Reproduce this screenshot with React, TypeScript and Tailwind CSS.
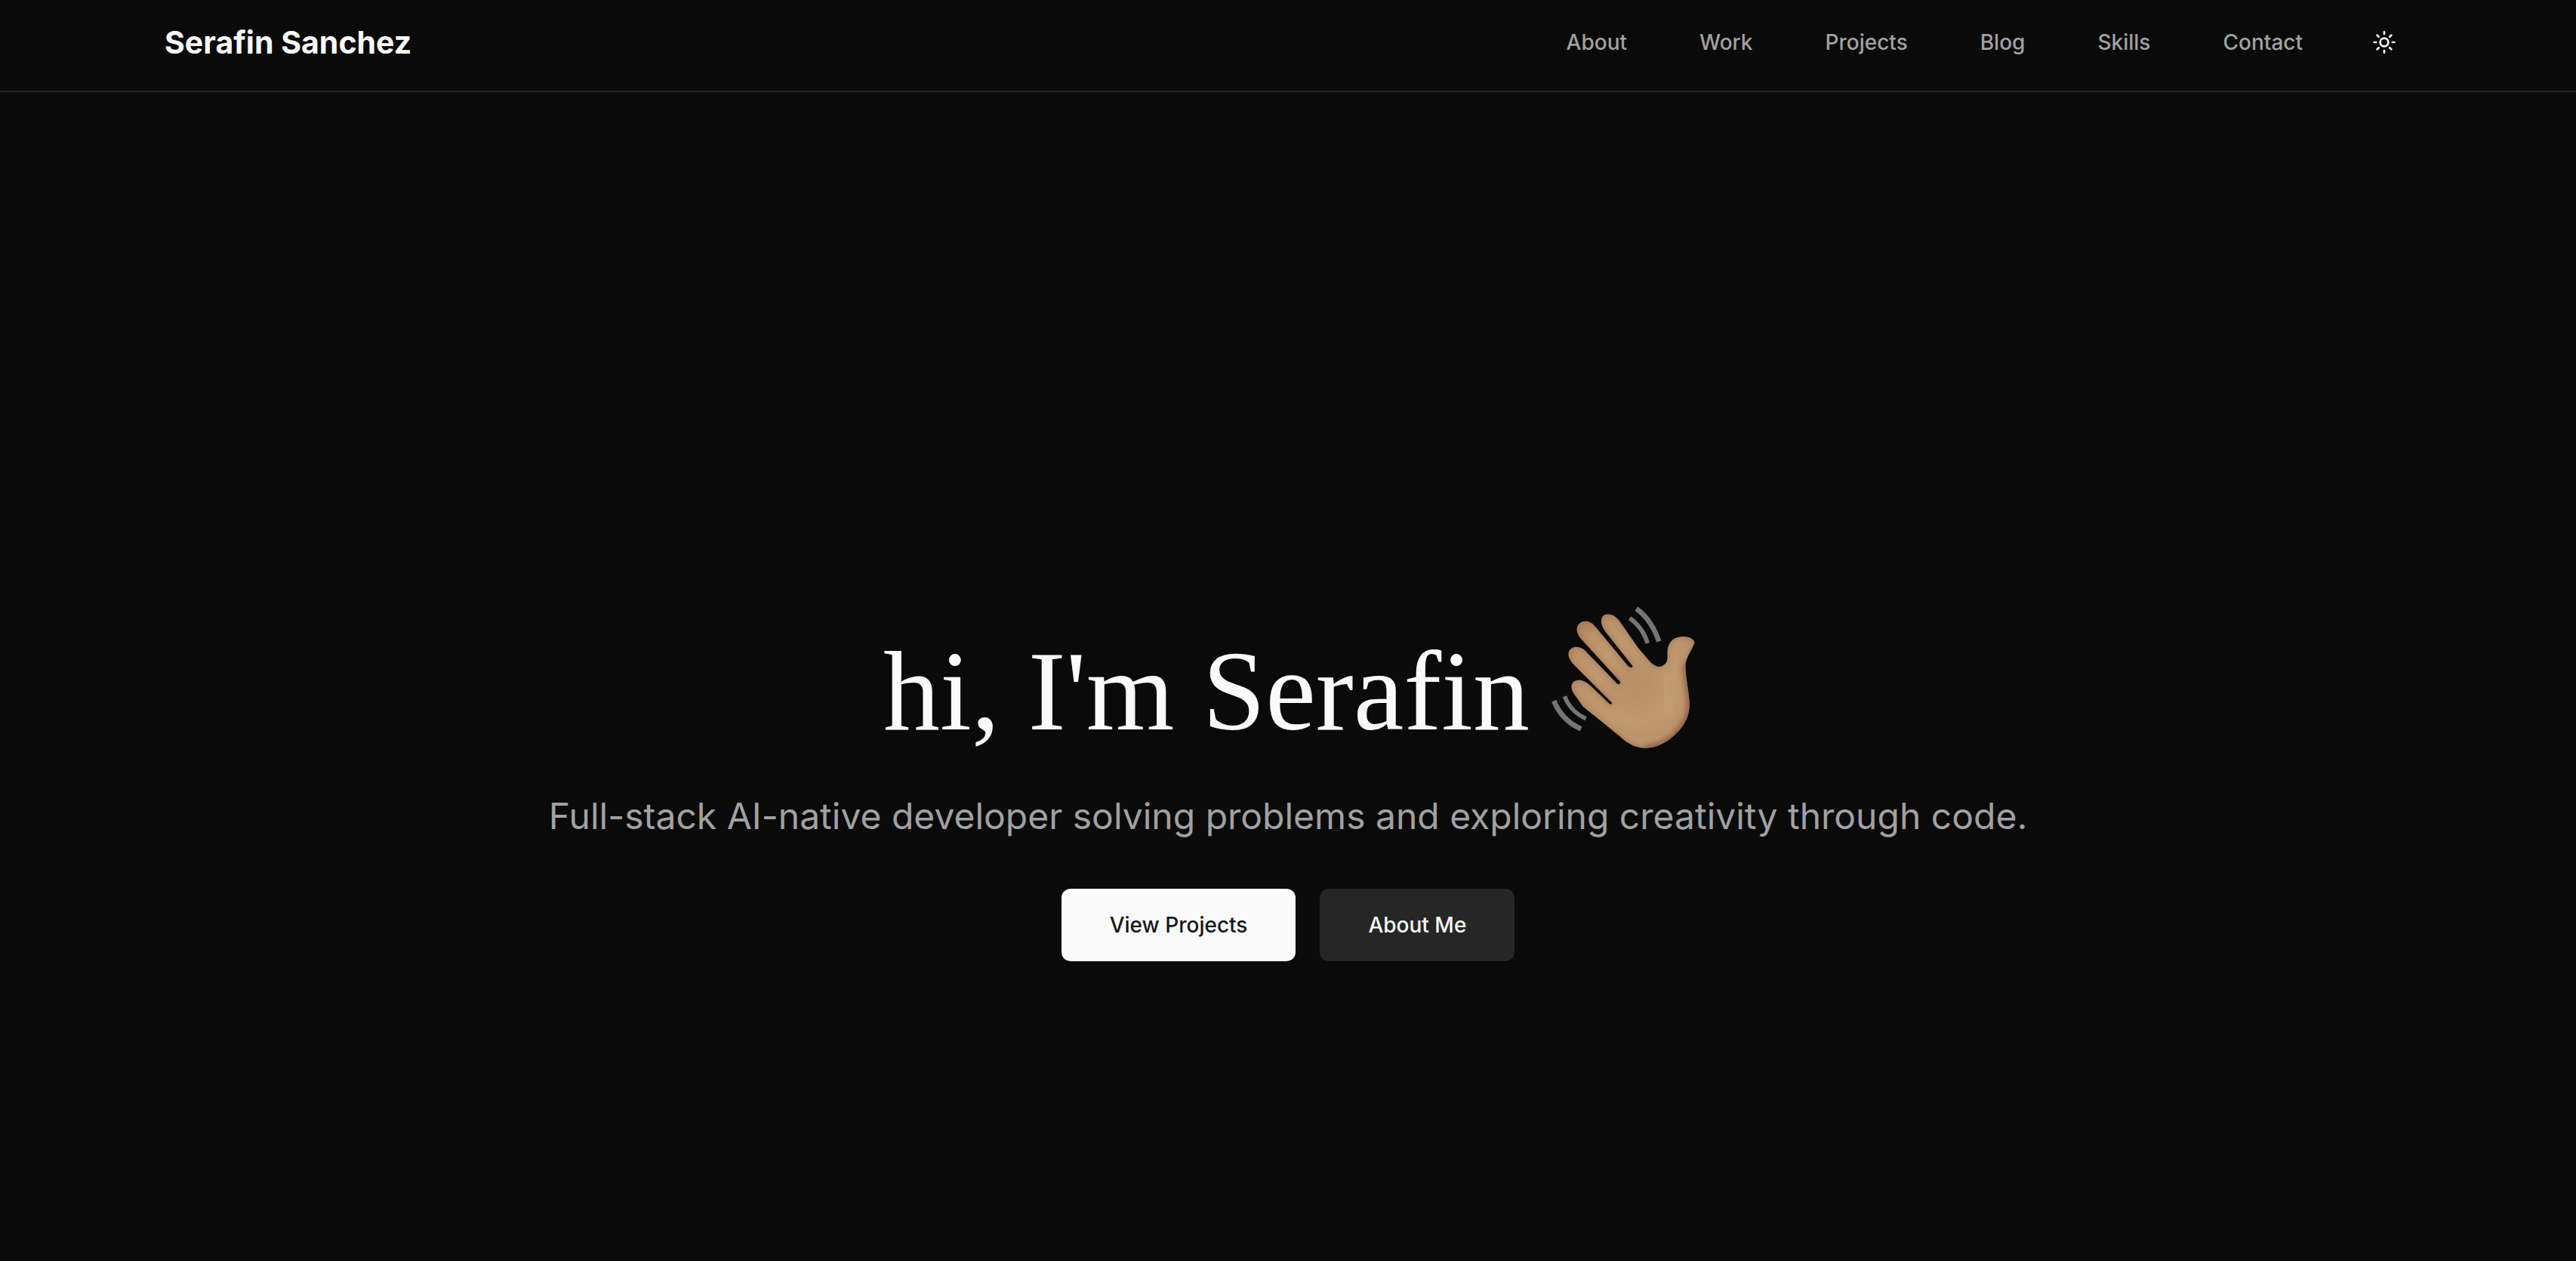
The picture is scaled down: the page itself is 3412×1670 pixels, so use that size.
import React from "react";

const links = ["About", "Work", "Projects", "Blog", "Skills", "Contact"];

function SunIcon() {
  return (
    <svg viewBox="0 0 32 32" className="size-8" fill="none" stroke="currentColor" strokeWidth="2.7" strokeLinecap="round" aria-hidden="true">
      <circle cx="16" cy="16" r="5.4" />
      <path d="M16 2.4v2.6M16 27V29.6M2.6 16H5.2M26.8 16h2.6M6.6 6.6l2.1 2.1M23.3 23.3l2.1 2.1M6.6 25.4l2.1-2.1M23.3 8.7l2.1-2.1" />
    </svg>
  );
}

function WavingHand() {
  const hand =
    "M315 130C340 122 362 135 378 158L450 262L498 318Q532 352 560 322Q568 310 566 285C564 245 585 220 620 217C650 214 674 226 674 242C668 262 645 290 638 325C636 370 650 420 654 480C656 545 620 590 575 625C540 650 510 660 475 660C430 658 400 635 375 612L230 495L195 445C175 415 185 392 212 390C228 389 242 397 258 410L335 484Q345 490 345 480L200 335C180 315 168 295 173 278C182 255 212 250 238 272L366 404Q378 411 378 396L222 225C205 205 200 182 212 168C228 150 258 150 280 178L410 334Q424 345 428 334L318 195C300 170 296 142 315 130Z";
  return (
    <svg viewBox="90 90 600 580" className="h-[193px] w-[200px] shrink-0" role="img" aria-label="Waving hand">
      <defs>
        <radialGradient id="palm" gradientUnits="userSpaceOnUse" cx="440" cy="400" r="310">
          <stop offset="0" stopColor="#b88f66" />
          <stop offset="0.5" stopColor="#bf996f" />
          <stop offset="0.82" stopColor="#bb926a" />
          <stop offset="1" stopColor="#b08560" />
        </radialGradient>
        <filter id="soft" x="-20%" y="-20%" width="140%" height="140%">
          <feGaussianBlur stdDeviation="9" />
        </filter>
        <clipPath id="handClip">
          <path d={hand} />
        </clipPath>
      </defs>
      <path d={hand} fill="url(#palm)" />
      <g clipPath="url(#handClip)">
        <path d={hand} fill="none" stroke="#85583f" strokeOpacity="0.5" strokeWidth="10" filter="url(#soft)" />
        <path d="M638 325C636 370 650 420 654 480C656 545 620 590 575 625C540 650 510 660 475 660" fill="none" stroke="#8a5a42" strokeWidth="22" strokeOpacity="0.75" filter="url(#soft)" />
        <path d="M570 360C550 420 555 480 585 530" fill="none" stroke="#c6a278" strokeWidth="40" strokeOpacity="0.5" filter="url(#soft)" />
      </g>
      <g fill="none" stroke="#757575">
        <path d="M442 105Q504 150 532 236" strokeWidth="20" />
        <path d="M416 143Q468 180 487 243" strokeWidth="17" />
        <path d="M157 454Q180 515 242 543" strokeWidth="17" />
        <path d="M114 472Q146 550 222 584" strokeWidth="20" />
      </g>
    </svg>
  );
}

export default function App() {
  return (
    <div className="flex min-h-screen flex-col bg-[#0a0a0a] font-['Inter',sans-serif] text-neutral-50">
      <header className="border-b-2 border-[#262626] pb-2">
        <div className="mx-auto flex h-28 max-w-[3072px] items-center justify-between px-12">
          <a href="#home" className="text-[41px] leading-none font-bold">Serafin Sanchez</a>
          <div className="flex items-center gap-[72px]">
            <nav className="flex items-center gap-24 text-[28px] leading-10 font-medium text-[#a1a1a1]">
              {links.map((label) => (
                <a key={label} href={`#${label.toLowerCase()}`}>{label}</a>
              ))}
            </nav>
            <button type="button" aria-label="Toggle theme" className="flex size-[72px] items-center justify-center">
              <SunIcon />
            </button>
          </div>
        </div>
      </header>
      <main className="flex flex-1 flex-col items-center pt-[679px]">
        <h1 className="flex items-start justify-center gap-6 pl-2 font-['Liberation_Serif',serif] text-[150px] leading-[228px] font-normal">
          <span className="whitespace-nowrap">hi, I'm Serafin</span>
          <WavingHand />
        </h1>
        <p className="mt-5 text-[48px] leading-[64px] text-[#a1a1a1] [font-optical-sizing:none]">
          Full-stack AI-native developer solving problems and exploring creativity through code.
        </p>
        <div className="mt-16 flex gap-8 text-[28px] leading-10 font-medium">
          <a href="#projects" className="flex h-24 items-center rounded-xl bg-neutral-50 px-16 text-neutral-900">View Projects</a>
          <a href="#about" className="flex h-24 items-center rounded-xl bg-neutral-800 px-16">About Me</a>
        </div>
      </main>
    </div>
  );
}
